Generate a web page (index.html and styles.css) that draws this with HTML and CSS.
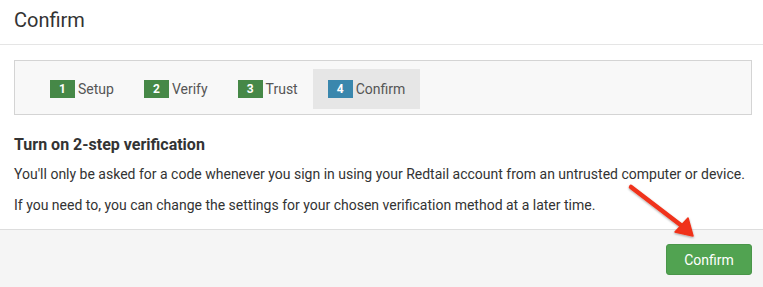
FILE: index.html
```html
<!DOCTYPE html>
<html lang="en">
<head>
<meta charset="UTF-8">
<title>Confirm</title>
<link rel="stylesheet" href="styles.css">
</head>
<body>
<div class="modal">
  <div class="modal-header">
    <h3>Confirm</h3>
  </div>

  <div class="modal-body">
    <ul class="steps">
      <li><span class="badge">1</span>Setup</li>
      <li><span class="badge">2</span>Verify</li>
      <li><span class="badge">3</span>Trust</li>
      <li class="active"><span class="badge badge-info">4</span>Confirm</li>
    </ul>

    <h4>Turn on 2-step verification</h4>
    <p>You'll only be asked for a code whenever you sign in using your Redtail account from an untrusted computer or device.</p>
    <p>If you need to, you can change the settings for your chosen verification method at a later time.</p>
  </div>

  <div class="modal-footer">
    <button class="btn-success">Confirm</button>
  </div>

  <svg class="arrow" width="80" height="64" viewBox="0 0 80 64">
    <defs>
      <filter id="shadow" x="-20%" y="-20%" width="140%" height="140%">
        <feDropShadow dx="0" dy="1" stdDeviation="1" flood-color="#000" flood-opacity="0.35"/>
      </filter>
    </defs>
    <g filter="url(#shadow)" fill="#f0321a" stroke="#f0321a">
      <line x1="5" y1="5" x2="56" y2="44" stroke-width="4.5" stroke-linecap="round"/>
      <polygon points="67,54 49,50 62,36" stroke-width="1.5" stroke-linejoin="round"/>
    </g>
  </svg>
</div>
</body>
</html>
```

FILE: styles.css
```css
body {
  margin: 0;
  font-family: Roboto, 'Liberation Sans', sans-serif;
  color: #333;
  background-color: #fff;
}
.modal {
  position: relative;
  width: 763px;
  height: 287px;
  overflow: hidden;
}
.modal-header {
  padding: 8px 14px 12px;
  border-bottom: 1px solid #e5e5e5;
}
.modal-header h3 {
  margin: 0;
  font-size: 20px;
  font-weight: 400;
  line-height: 24px;
  color: #333;
}
.modal-body {
  padding: 15px 11px 0 14px;
}
.steps {
  list-style: none;
  margin: 0 0 20px;
  padding: 8px 20px 5px;
  display: flex;
  background-color: #f8f8f8;
  border: 1px solid #d4d4d4;
}
.steps li {
  display: flex;
  align-items: center;
  gap: 3px;
  height: 40px;
  padding: 0 15px;
  font-size: 14px;
  color: #555;
}
.steps li.active {
  background-color: #e6e6e6;
}
.badge {
  display: inline-block;
  width: 25px;
  height: 18px;
  line-height: 18px;
  text-align: center;
  font-size: 12px;
  font-weight: 700;
  color: #fff;
  background-color: #468847;
}
.badge-info {
  background-color: #3a87ad;
}
h4 {
  margin: 0 0 9px;
  font-size: 16px;
  font-weight: 700;
  line-height: 20px;
  color: #333;
}
p {
  margin: 0 0 11px;
  font-size: 14px;
  line-height: 20px;
  color: #333;
}
.modal-footer {
  position: absolute;
  left: 0;
  right: 0;
  top: 229px;
  bottom: 0;
  display: flex;
  justify-content: flex-end;
  align-items: flex-start;
  padding: 14px 11px 0;
  background-color: #f5f5f5;
  border-top: 1px solid #ddd;
}
.btn-success {
  width: 86px;
  height: 31px;
  font-family: Roboto, 'Liberation Sans', sans-serif;
  font-size: 14px;
  color: #fff;
  background-color: #51a351;
  border: 1px solid #4a964a;
  border-radius: 3px;
}
.arrow {
  position: absolute;
  left: 626px;
  top: 182px;
}
```
